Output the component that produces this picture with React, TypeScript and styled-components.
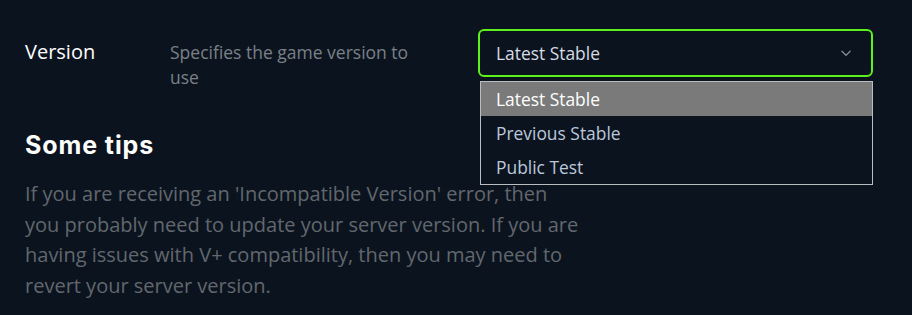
import React from 'react';
import styled, { createGlobalStyle } from 'styled-components';

const GlobalStyle = createGlobalStyle`
  html, body {
    margin: 0;
    padding: 0;
    background: #0b141e;
  }
  body {
    font-family: "Open Sans", "Noto Sans", sans-serif;
    color: #ffffff;
  }
`;

const Page = styled.div`
  width: 912px;
  height: 315px;
  box-sizing: border-box;
  padding: 29px 0 0 25px;
  background: #0b141e;
  overflow: hidden;
`;

const SettingRow = styled.div`
  display: grid;
  grid-template-columns: 145px 308px 395px;
  align-items: start;
`;

const Label = styled.div`
  font-size: 20px;
  line-height: 26px;
  padding-top: 10px;
  color: #ffffff;
`;

const Description = styled.div`
  font-size: 17.5px;
  line-height: 25px;
  padding-top: 11px;
  padding-right: 60px;
  color: #7b8088;
`;

const SelectWrap = styled.div`
  position: relative;
`;

const SelectBox = styled.div`
  height: 48px;
  box-sizing: border-box;
  border: 2px solid #5cf01c;
  border-radius: 6px;
  display: flex;
  align-items: center;
  justify-content: space-between;
  padding: 0 18px 0 16px;
  font-size: 17.4px;
  color: #d6dbe4;
`;

const Menu = styled.ul`
  position: absolute;
  top: 52px;
  left: 2px;
  right: 0;
  margin: 0;
  padding: 0;
  list-style: none;
  background: #0b141e;
  border: 1px solid #b9bcc0;
`;

const Option = styled.li<{ $active?: boolean }>`
  height: 34px;
  line-height: 34px;
  padding-left: 15px;
  font-size: 17.4px;
  color: ${(p) => (p.$active ? '#ffffff' : '#bcc8dc')};
  background: ${(p) => (p.$active ? '#7a7a7a' : 'transparent')};
`;

const Tips = styled.section`
  margin-top: 39px;
  width: 557px;
`;

const Heading = styled.h2`
  margin: 0 0 18px;
  font-family: Inter, "Noto Sans", sans-serif;
  font-weight: 700;
  font-size: 25px;
  line-height: 32px;
  letter-spacing: 0.9px;
  color: #ffffff;
`;

const Body = styled.p`
  margin: 0;
  font-size: 20px;
  line-height: 30.5px;
  color: #62676e;
`;

const Chevron = () => (
  <svg width="14" height="14" viewBox="0 0 24 24" fill="none" stroke="#8a9099" strokeWidth="2.2" strokeLinecap="round" strokeLinejoin="round">
    <path d="M5 9l7 7 7-7" />
  </svg>
);

const options = ['Latest Stable', 'Previous Stable', 'Public Test'];

export default function App() {
  return (
    <>
      <GlobalStyle />
      <Page>
        <SettingRow>
          <Label>Version</Label>
          <Description>Specifies the game version to use</Description>
          <SelectWrap>
            <SelectBox>
              <span>Latest Stable</span>
              <Chevron />
            </SelectBox>
            <Menu>
              {options.map((o, i) => (
                <Option key={o} $active={i === 0}>{o}</Option>
              ))}
            </Menu>
          </SelectWrap>
        </SettingRow>
        <Tips>
          <Heading>Some tips</Heading>
          <Body>
            If you are receiving an 'Incompatible Version' error, then you probably need to update your server version. If you are having issues with V+ compatibility, then you may need to revert your server version.
          </Body>
        </Tips>
      </Page>
    </>
  );
}
